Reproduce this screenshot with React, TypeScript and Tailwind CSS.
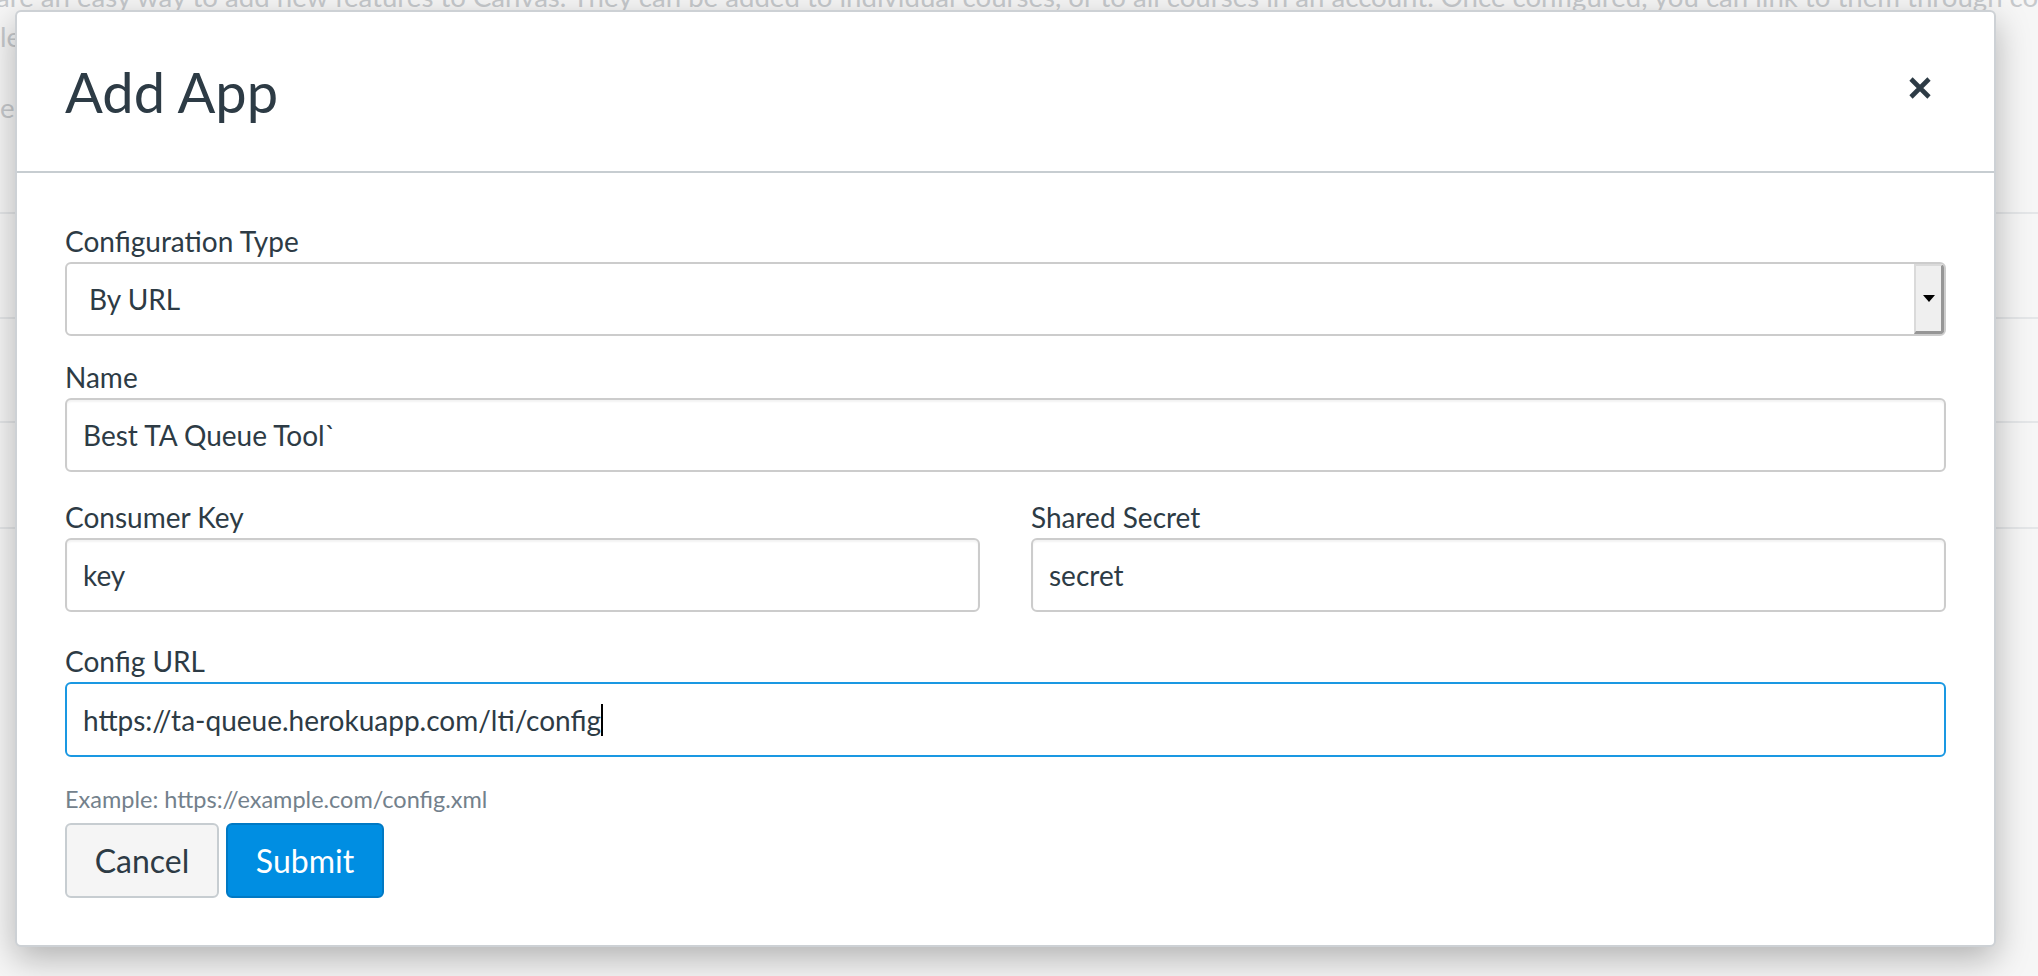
import React from 'react';

const inputBox =
  'h-[74px] w-full flex items-center border-2 border-[#cccccc] rounded-[6px] bg-white px-[16px] text-[28px] text-[#2d3b45] shadow-[inset_0_2px_2px_rgba(0,0,0,0.05)]';

const Label: React.FC<{ text: string; className?: string }> = ({ text, className }) => (
  <div className={`text-[28px] leading-[36px] text-[#2d3b45] ${className || ''}`}>{text}</div>
);

export default function App() {
  return (
    <div className="relative w-[2038px] h-[976px] overflow-hidden bg-[#f6f6f6] font-[Lato,'Liberation_Sans',sans-serif]">
      {/* page behind the modal */}
      <div className="text-[#c6c9cc] text-[27.6px] leading-[40px] whitespace-nowrap">
        <div className="-mt-[23px] -ml-[4px]">
          are an easy way to add new features to Canvas. They can be added to individual courses, or to all courses in an account. Once configured, you can link to them through course navigation
        </div>
        <div>le</div>
        <div className="mt-[31px]">e</div>
        <div className="h-[86px] border-b-2 border-[#e4e6e8]" />
        <div className="h-[105px] border-b-2 border-[#e4e6e8]" />
        <div className="h-[104px] border-b-2 border-[#e4e6e8]" />
        <div className="h-[106px] border-b-2 border-[#e4e6e8]" />
      </div>

      {/* modal */}
      <div className="absolute left-[15px] top-[10px] w-[1981px] h-[937px] bg-white border-2 border-[#cdd1d5] rounded-[6px] shadow-[0_12px_34px_rgba(0,0,0,0.28)] flex flex-col">
        <div className="h-[161px] border-b-2 border-[#c7cdd1] flex items-center justify-between pl-[48px] pr-[62px]">
          <h2 className="text-[56px] leading-[56px] text-[#2d3b45]">Add App</h2>
          <button className="-mt-[7px] w-[24px] h-[24px]">
            <svg width="24" height="24" viewBox="0 0 24 24">
              <path d="M3 3 L21 21 M21 3 L3 21" stroke="#2d3b45" strokeWidth="4.6" strokeLinecap="butt" fill="none" />
            </svg>
          </button>
        </div>

        <div className="px-[48px] pt-[50px]">
          <Label text="Configuration Type" />
          <div className="mt-[3px] h-[74px] flex border-2 border-[#cccccc] rounded-[6px] bg-white overflow-hidden">
            <div className="flex-1 flex items-center pl-[22px] text-[28px] text-[#2d3b45]">By URL</div>
            <div className="w-[30px] h-full flex items-center justify-center bg-[#efefef] border-l-2 border-t-2 border-[#dadada] border-r-[3px] border-b-[3px] border-r-[#969696] border-b-[#969696]">
              <div className="w-0 h-0 border-l-[6px] border-r-[6px] border-t-[7px] border-l-transparent border-r-transparent border-t-black" />
            </div>
          </div>

          <Label text="Name" className="mt-[23px]" />
          <div className={`mt-[3px] ${inputBox}`}>Best TA Queue Tool`</div>

          <div className="mt-[27px] grid grid-cols-2 gap-x-[51px]">
            <div>
              <Label text="Consumer Key" />
              <div className={`mt-[3px] ${inputBox}`}>key</div>
            </div>
            <div>
              <Label text="Shared Secret" />
              <div className={`mt-[3px] ${inputBox}`}>secret</div>
            </div>
          </div>

          <Label text="Config URL" className="mt-[31px]" />
          <div className="mt-[3px] h-[75px] w-full flex items-center border-2 border-[#1a98e2] rounded-[6px] bg-white px-[16px] text-[28px] text-[#2d3b45]">
            <span>https://ta-queue.herokuapp.com/lti/config</span>
            <span className="inline-block w-[2px] h-[32px] bg-black" />
          </div>

          <div className="mt-[27px] text-[23.5px] leading-[30px] text-[#73818c]">Example: https://example.com/config.xml</div>

          <div className="mt-[9px] flex gap-[7px]">
            <button className="w-[154px] h-[75px] border-2 border-[#c7cdd1] bg-[#f5f5f5] rounded-[6px] text-[32px] text-[#2d3b45]">Cancel</button>
            <button className="w-[158px] h-[75px] border-2 border-[#0079c4] bg-[#008ee2] rounded-[6px] text-[32px] text-white">Submit</button>
          </div>
        </div>
      </div>
    </div>
  );
}
